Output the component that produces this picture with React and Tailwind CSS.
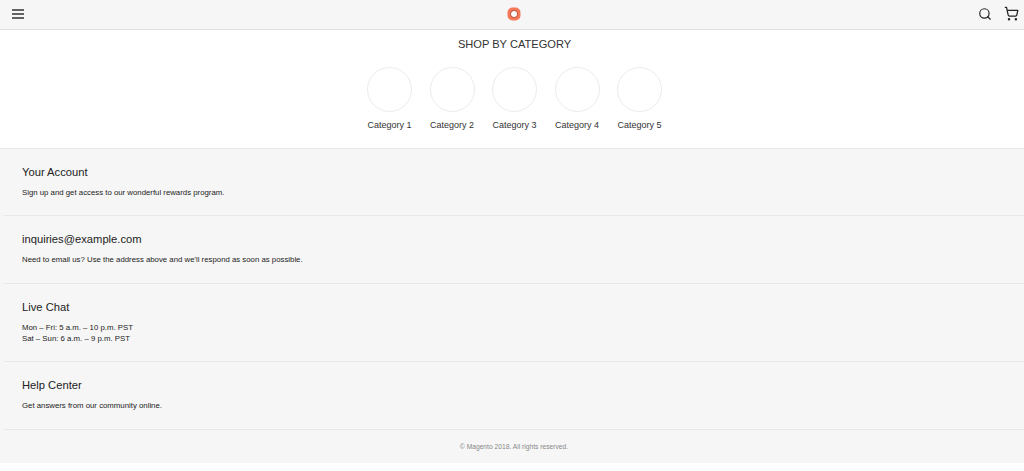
import { Search, ShoppingCart } from "lucide-react";

const categories = ["Category 1", "Category 2", "Category 3", "Category 4", "Category 5"];

function Section({ title, children, className }) {
  return (
    <div className={`ml-1 border-b border-[#e8e8e8] pl-[18px] ${className}`}>
      <h3 className="text-[11.2px] leading-[15px] text-[#222]">{title}</h3>
      <div className="mt-[7px] text-[7.8px] leading-[11px] text-[#222]">{children}</div>
    </div>
  );
}

export default function App() {
  return (
    <div className="h-[471px] bg-white font-['Liberation_Sans',sans-serif]">
      <header className="flex h-[30px] items-center justify-between border-b border-[#e0e0e0] bg-[#f6f6f6] pb-[2px] pl-[11px] pr-[5px]">
        <svg viewBox="0 0 14 14" className="h-[14px] w-[14px]">
          <path d="M1 3h12M1 7h12M1 11h12" fill="none" stroke="#333" strokeWidth="1.3" />
        </svg>
        <svg viewBox="0 0 14 14" className="ml-[25px] h-[14px] w-[14px]">
          <rect x="0.5" y="0.5" width="13" height="13" rx="5" fill="#f5795a" />
          <circle cx="7" cy="7" r="3.2" fill="#fff" />
          <circle cx="7" cy="7" r="3.6" fill="none" stroke="#c9614a" strokeWidth="1.2" />
        </svg>
        <div className="flex items-center gap-[12px]">
          <Search className="h-[14px] w-[14px] text-[#222]" strokeWidth={2} />
          <ShoppingCart className="h-[15px] w-[15px] text-[#222]" strokeWidth={2} />
        </div>
      </header>

      <section className="flex h-[119px] flex-col items-center border-b border-[#e8e8e8] pl-[5px]">
        <h2 className="mt-[8px] text-[11.1px] leading-[13px] text-[#333]">SHOP BY CATEGORY</h2>
        <div className="mt-[16px] flex gap-[17.5px]">
          {categories.map((name) => (
            <div key={name} className="flex w-[45px] flex-col items-center">
              <div className="h-[45px] w-[45px] rounded-full border border-[#ececec]" />
              <span className="mt-[8px] whitespace-nowrap text-[9px] leading-[11px] text-[#333]">{name}</span>
            </div>
          ))}
        </div>
      </section>

      <div className="h-[314px] bg-[#f6f6f6]">
        <Section title="Your Account" className="h-[67px] pt-[16px]">
          <p>Sign up and get access to our wonderful rewards program.</p>
        </Section>
        <Section title="inquiries@example.com" className="h-[68px] pt-[16px]">
          <p>Need to email us? Use the address above and we'll respond as soon as possible.</p>
        </Section>
        <Section title="Live Chat" className="h-[78px] pt-[16px]">
          <p>Mon – Fri: 5 a.m. – 10 p.m. PST</p>
          <p>Sat – Sun: 6 a.m. – 9 p.m. PST</p>
        </Section>
        <Section title="Help Center" className="h-[68px] pt-[16px]">
          <p>Get answers from our community online.</p>
        </Section>
        <p className="ml-1 pt-[12px] text-center text-[6.7px] leading-[9px] text-[#888]">© Magento 2018. All rights reserved.</p>
      </div>
    </div>
  );
}
